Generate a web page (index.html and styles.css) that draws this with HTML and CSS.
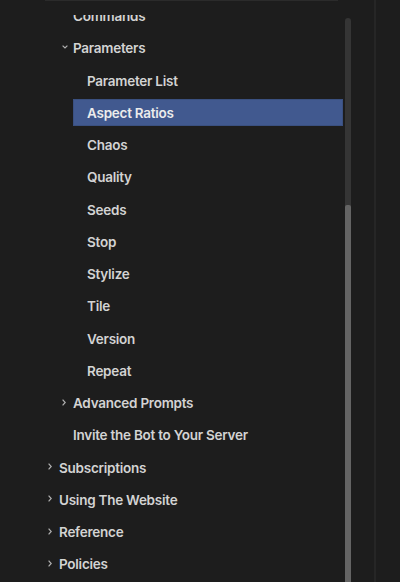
FILE: index.html
```html
<!DOCTYPE html>
<html>
<head>
<meta charset="utf-8">
<link rel="stylesheet" href="styles.css">
</head>
<body>
<div class="layout">
  <aside class="sidebar">
    <div class="topline"></div>
    <div class="viewport">
      <ul class="tree">
        <li class="item lvl2"><span class="row"><span class="chev"></span><span class="text">Commands</span></span></li>
        <li class="item lvl2"><span class="row"><span class="chev"><svg width="6" height="4" viewBox="0 0 6 4"><path d="M0.6 0.6 L3 3 L5.4 0.6" fill="none" stroke="#b0b0b0" stroke-width="1.2"/></svg></span><span class="text">Parameters</span></span></li>
        <li class="item lvl3"><span class="row"><span class="text">Parameter List</span></span></li>
        <li class="item lvl3 active"><span class="row"><span class="text">Aspect Ratios</span></span></li>
        <li class="item lvl3"><span class="row"><span class="text">Chaos</span></span></li>
        <li class="item lvl3"><span class="row"><span class="text">Quality</span></span></li>
        <li class="item lvl3"><span class="row"><span class="text">Seeds</span></span></li>
        <li class="item lvl3"><span class="row"><span class="text">Stop</span></span></li>
        <li class="item lvl3"><span class="row"><span class="text">Stylize</span></span></li>
        <li class="item lvl3"><span class="row"><span class="text">Tile</span></span></li>
        <li class="item lvl3"><span class="row"><span class="text">Version</span></span></li>
        <li class="item lvl3"><span class="row"><span class="text">Repeat</span></span></li>
        <li class="item lvl2"><span class="row"><span class="chev"><svg width="4" height="7" viewBox="0 0 4 7"><path d="M0.6 0.6 L3.2 3.5 L0.6 6.4" fill="none" stroke="#b0b0b0" stroke-width="1.2"/></svg></span><span class="text">Advanced Prompts</span></span></li>
        <li class="item lvl2"><span class="row"><span class="chev"></span><span class="text">Invite the Bot to Your Server</span></span></li>
        <li class="item lvl1"><span class="row"><span class="chev"><svg width="4" height="7" viewBox="0 0 4 7"><path d="M0.6 0.6 L3.2 3.5 L0.6 6.4" fill="none" stroke="#b0b0b0" stroke-width="1.2"/></svg></span><span class="text">Subscriptions</span></span></li>
        <li class="item lvl1"><span class="row"><span class="chev"><svg width="4" height="7" viewBox="0 0 4 7"><path d="M0.6 0.6 L3.2 3.5 L0.6 6.4" fill="none" stroke="#b0b0b0" stroke-width="1.2"/></svg></span><span class="text">Using The Website</span></span></li>
        <li class="item lvl1"><span class="row"><span class="chev"><svg width="4" height="7" viewBox="0 0 4 7"><path d="M0.6 0.6 L3.2 3.5 L0.6 6.4" fill="none" stroke="#b0b0b0" stroke-width="1.2"/></svg></span><span class="text">Reference</span></span></li>
        <li class="item lvl1"><span class="row"><span class="chev"><svg width="4" height="7" viewBox="0 0 4 7"><path d="M0.6 0.6 L3.2 3.5 L0.6 6.4" fill="none" stroke="#b0b0b0" stroke-width="1.2"/></svg></span><span class="text">Policies</span></span></li>
      </ul>
    </div>
  </aside>
  <div class="scrollbar"><div class="thumb"></div></div>
  <div class="divider"></div>
  <div class="rest"></div>
</div>
</body>
</html>
```
FILE: styles.css
```css
html, body {
  margin: 0;
  padding: 0;
  background: #1d1d1d;
  height: 100%;
  overflow: hidden;
}
.layout {
  display: flex;
  height: 582px;
  font-family: Inter, "Noto Sans", sans-serif;
}
.sidebar {
  width: 343px;
  flex: none;
  display: flex;
  flex-direction: column;
}
.topline {
  height: 1px;
  margin-left: 45px;
  margin-right: 5px;
  background: #2b2b2b;
}
.viewport {
  margin-top: 14px;
  flex: 1;
  overflow: hidden;
}
.tree {
  list-style: none;
  margin: -15px 0 0 0;
  padding: 0;
}
.item {
  height: 32.25px;
  display: flex;
  align-items: center;
}
.row {
  display: flex;
  align-items: center;
  height: 27px;
  flex: 1;
  font-size: 13.5px;
  font-weight: 600;
  color: #d3d3d3;
  letter-spacing: -0.25px;
}
.lvl1 .row { margin-left: 45px; }
.lvl2 .row { margin-left: 59px; }
.lvl3 .row { margin-left: 73px; padding-left: 14px; }
.chev {
  width: 14px;
  flex: none;
  display: flex;
  align-items: center;
  padding-left: 3px;
  box-sizing: border-box;
  margin-top: -2px;
}
.chev svg { display: block; }
.active .row {
  background: #41598f;
  color: #ececec;
  box-shadow: inset 0 0 0 1px #3a5080;
}
.scrollbar {
  width: 6px;
  flex: none;
  margin-left: 2px;
  margin-top: 18px;
  background: #353535;
  border-radius: 3px 3px 0 0;
  display: flex;
  flex-direction: column;
  justify-content: flex-end;
}
.thumb {
  height: 377px;
  background: #646464;
  border-radius: 2px 2px 0 0;
}
.divider {
  width: 2px;
  flex: none;
  margin-left: 23px;
  background: #262626;
}
.rest { flex: 1; }
```
